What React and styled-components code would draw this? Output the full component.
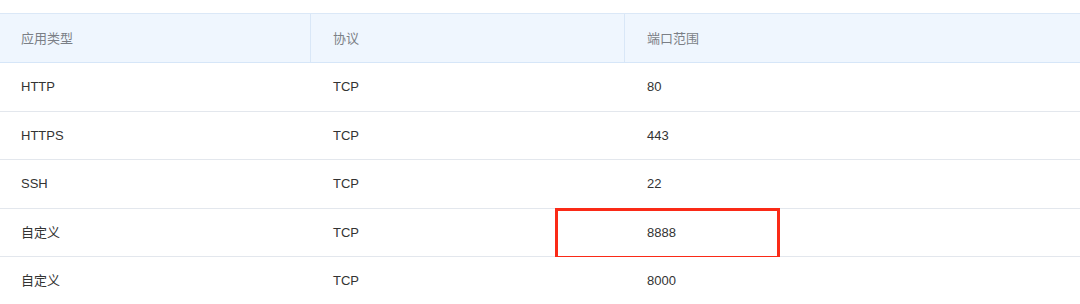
import styled, { createGlobalStyle } from "styled-components";

const GlobalStyle = createGlobalStyle`
  html, body {
    margin: 0;
    padding: 0;
    background: #ffffff;
    overflow: hidden;
  }
  body {
    font-family: "Liberation Sans", "Noto Sans CJK SC", sans-serif;
    font-size: 13px;
  }
`;

const Page = styled.div`
  width: 1080px;
  height: 304px;
  padding-top: 13px;
  box-sizing: border-box;
  overflow: hidden;
`;

const Table = styled.div`
  width: 100%;
`;

const Row = styled.div`
  position: relative;
  display: grid;
  grid-template-columns: 311px 314px 1fr;
  height: ${({ $head }) => ($head ? "50px" : "48.5px")};
  box-sizing: border-box;
  background: ${({ $head }) => ($head ? "#eff6fe" : "#ffffff")};
  border-top: ${({ $head }) => ($head ? "1px solid #dbe8f7" : "none")};
  border-bottom: 1px solid ${({ $head }) => ($head ? "#d6e6f8" : "#e3e7ed")};
`;

const Cell = styled.div`
  display: flex;
  align-items: center;
  padding-left: ${({ $pad }) => $pad}px;
  color: ${({ $head }) => ($head ? "#7b7f86" : "#333333")};
  border-right: ${({ $head, $divider }) =>
    $head && $divider ? "1px solid #d9e7f7" : "none"};
  line-height: 1;
`;

const Highlight = styled.div`
  position: absolute;
  left: 555px;
  top: -1px;
  width: 225px;
  height: 51px;
  box-sizing: border-box;
  border: 3px solid #fa2a17;
  pointer-events: none;
`;

const columns = ["应用类型", "协议", "端口范围"];
const pads = [21, 22, 22];

const rows = [
  { type: "HTTP", proto: "TCP", port: "80" },
  { type: "HTTPS", proto: "TCP", port: "443" },
  { type: "SSH", proto: "TCP", port: "22" },
  { type: "自定义", proto: "TCP", port: "8888", marked: true },
  { type: "自定义", proto: "TCP", port: "8000" },
];

export default function App() {
  return (
    <>
      <GlobalStyle />
      <Page>
        <Table>
          <Row $head>
            {columns.map((c, i) => (
              <Cell key={c} $head $pad={pads[i]} $divider={i < 2}>
                {c}
              </Cell>
            ))}
          </Row>
          {rows.map((r, i) => (
            <Row key={i}>
              <Cell $pad={pads[0]}>{r.type}</Cell>
              <Cell $pad={pads[1]}>{r.proto}</Cell>
              <Cell $pad={pads[2]}>{r.port}</Cell>
              {r.marked && <Highlight />}
            </Row>
          ))}
        </Table>
      </Page>
    </>
  );
}
